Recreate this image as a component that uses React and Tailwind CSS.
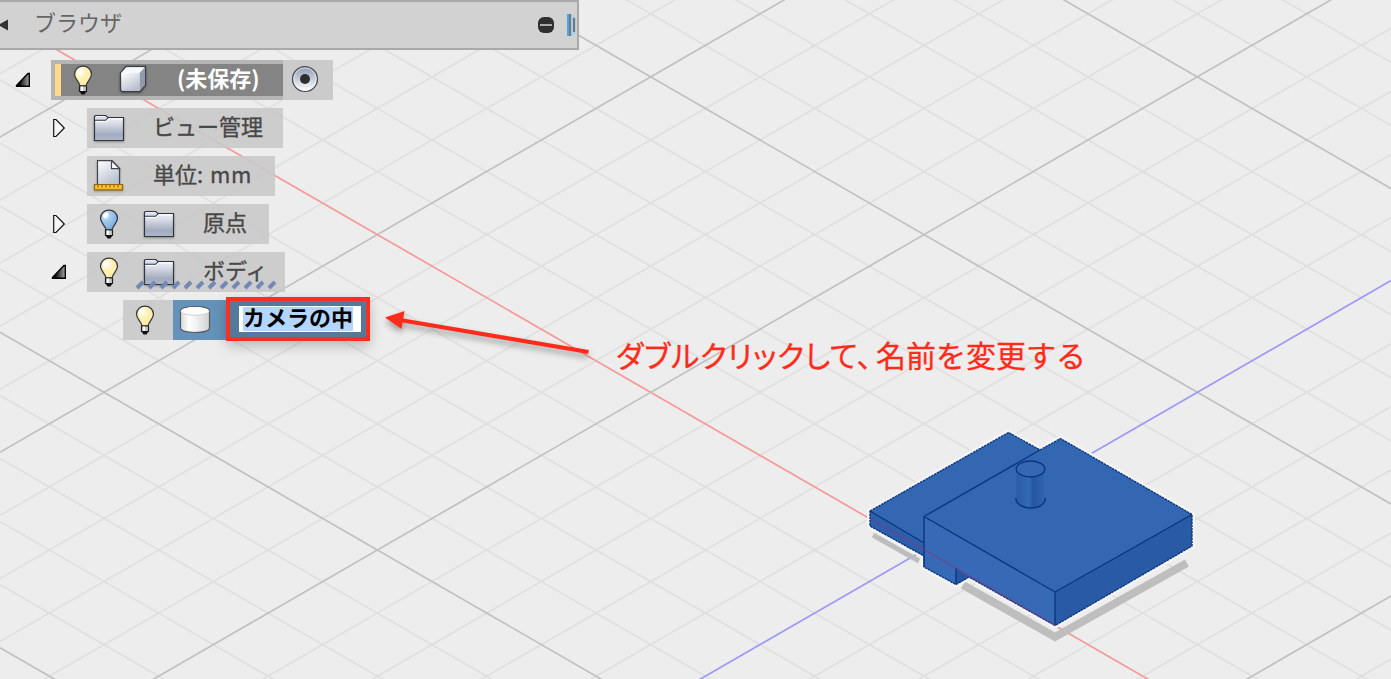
import React from "react";

const GRID_STEPS = Array.from({ length: 32 }, (_, i) => i - 12);

function GridLines() {
  const minor = [];
  const major = [];
  GRID_STEPS.forEach((k) => {
    const c = 76.9 + k * 63.08;
    const isMajor = k % 5 === 0;
    const stroke = isMajor ? "#c1c1c1" : "#e0e0e0";
    const down = k === 5 ? "#f59a98" : stroke;
    const up = k === 10 ? "#9c9af4" : stroke;
    const width = isMajor ? 1.7 : 1.8;
    (isMajor ? major : minor).push(
      <line key={"d" + k} x1="0" y1={c - 375.4} x2="1391" y2={c + 427.1} stroke={down} strokeWidth={width} />,
      <line key={"u" + k} x1="0" y1={c + 375.4} x2="1391" y2={c - 427.1} stroke={up} strokeWidth={width} />
    );
  });
  return <g>{minor}{major}</g>;
}

function Model() {
  const outline =
    "M870 511 L1008.5 432.5 L1040 450 L1060.5 438.5 L1192 514.5 V546 L1055 625.5 L969 577 L956 584.5 L924 567 V556 L870 526Z";
  return (
    <g strokeLinejoin="round">
      <path d="M873 535 L919 561" stroke="#bdbdbd" strokeWidth="5" />
      <path d="M963 585 L1055 637 L1187 563" fill="none" stroke="#bebebe" strokeWidth="8" strokeLinejoin="miter" />
      <path d={outline} fill="#f5f5f5" stroke="#f5f5f5" strokeWidth="6" />
      <path d={outline} fill="#3467b2" />
      <path d="M870 511 L924 543 V556 L870 526Z" fill="#2d5fab" />
      <path d="M924 516.5 L1055 592 V625.5 L969 577 L956 584.5 L924 567Z" fill="#3669b6" />
      <path d="M956 568 L969 577 L956 584.5Z" fill="#2457a0" />
      <path d="M1055 592 L1192 514.5 V546 L1055 625.5Z" fill="#285aa5" />
      <path d="M1016.5 470 V500 A14 8 0 0 0 1044.5 500 V470Z" fill="url(#pin)" />
      <g fill="none" stroke="#0b367f" strokeWidth="1.4">
        <path d={outline} strokeDasharray="2.4 0.8" />
        <path d="M870 511 L924 543 M1040 450 L924 516.5 V567 M924 516.5 L1055 592 L1192 514.5 M1055 592 V625 M956 568 V584" />
        <ellipse cx="1030.5" cy="469" rx="14.3" ry="8" fill="#3467b2" />
        <path d="M1016 498 C1015 503 1022 508 1031 508 C1040 508 1046 503 1045 498" />
      </g>
      <path d="M870 518.5 L1055 625.2" stroke="#7a3d86" strokeWidth="1.3" opacity=".75" />
    </g>
  );
}

function Scene() {
  return (
    <svg className="absolute inset-0" width="1391" height="679" viewBox="0 0 1391 679">
      <defs>
        <linearGradient id="pin">
          <stop offset="0" stopColor="#2a5ba4" />
          <stop offset=".45" stopColor="#3469b6" />
          <stop offset=".6" stopColor="#2456a0" />
          <stop offset="1" stopColor="#3164b0" />
        </linearGradient>
      </defs>
      <GridLines />
      <Model />
    </svg>
  );
}

function Gradients() {
  return (
    <svg className="absolute" width="0" height="0">
      <defs>
        <linearGradient id="metal" x1="0" y1="0" x2="0" y2="1">
          <stop offset="0" stopColor="#f3f5f9" />
          <stop offset=".3" stopColor="#dcdfe8" />
          <stop offset=".75" stopColor="#a3abc0" />
          <stop offset="1" stopColor="#aeb6c8" />
        </linearGradient>
        <linearGradient id="paper" x1="0" y1="0" x2=".6" y2="1">
          <stop offset="0" stopColor="#fff" />
          <stop offset="1" stopColor="#b9c0d0" />
        </linearGradient>
        <linearGradient id="ring" x1="0" y1="0" x2="0" y2="1">
          <stop offset="0" stopColor="#8d9ab3" />
          <stop offset="1" stopColor="#fff" />
        </linearGradient>
        <linearGradient id="drum">
          <stop offset="0" stopColor="#d8d8d8" />
          <stop offset=".3" stopColor="#fff" />
          <stop offset=".6" stopColor="#eee" />
          <stop offset="1" stopColor="#d0d0d0" />
        </linearGradient>
        <linearGradient id="wedge">
          <stop offset="0.2" stopColor="#000" />
          <stop offset="1" stopColor="#a8a8a8" />
        </linearGradient>
        <radialGradient id="glowOn" cx=".35" cy=".3" r=".75">
          <stop offset="0" stopColor="#fff" />
          <stop offset=".4" stopColor="#fff2b8" />
          <stop offset="1" stopColor="#fdeaa0" />
        </radialGradient>
        <radialGradient id="glowOff" cx=".3" cy=".25" r=".75">
          <stop offset="0" stopColor="#fff" />
          <stop offset=".35" stopColor="#a9cdf0" />
          <stop offset="1" stopColor="#7badde" />
        </radialGradient>
      </defs>
    </svg>
  );
}

function Bulb({ off = false }) {
  return (
    <svg className="shrink-0" width="20" height="30" viewBox="0 0 20 30">
      <path
        d="M7 21 C6.500 16.500 1.500 14 1.500 9.200 C1.500 4.400 5.200 1.200 10 1.200 S18.500 4.400 18.500 9.200 C18.500 14 13.500 16.500 13 21Z"
        fill={off ? "url(#glowOff)" : "url(#glowOn)"}
        stroke="#3a3a3a"
        strokeWidth="1.3"
      />
      <ellipse cx="6.8" cy="6.4" rx="2.2" ry="3" fill="#fff" opacity=".9" transform="rotate(30 6.8 6.4)" />
      <path d="M6.500 21 H13.500 V26.500 H6.500Z" fill="#c8c8c8" stroke="#222" strokeWidth="1.200" />
      <path d="M9 21.500 V26" stroke="#fff" strokeWidth="2" />
      <path d="M6.200 26 H13.800 L11.500 29.500 H8.500Z" fill="#111" />
    </svg>
  );
}

function Cube() {
  return (
    <svg className="shrink-0 drop-shadow-[0_1px_1px_rgba(0,0,0,0.35)]" width="28" height="28" viewBox="0 0 28 28">
      <path d="M1.500 8 L7 1.500 H26.500 V20 L21 26.500 H3 L1.500 25Z" fill="#c8ccd6" stroke="#3b3f48" strokeWidth="1.300" />
      <path d="M2.200 8 L7.300 2.200 H25.500 L20.500 8Z" fill="#f7f8fb" />
      <path d="M20.700 8 L26 2.500 V19.800 L20.700 25.500Z" fill="#929baa" />
      <path d="M2.200 8 H20.500 V25.800 H3Z" fill="url(#paper)" />
    </svg>
  );
}

function Folder() {
  return (
    <svg className="shrink-0 drop-shadow-[0_1px_1px_rgba(0,0,0,0.35)]" width="32" height="28" viewBox="0 0 32 28">
      <path d="M1.500 2.500 L2.500 1.500 H12.500 L15 3.500 H30.500 V26.500 H1.500Z" fill="url(#metal)" stroke="#33373f" strokeWidth="1.200" />
      <path d="M2.200 3 H12 L14 4 L12 6 H2.200Z" fill="#d7dcee" />
      <path d="M2 6.300 H12.500 L15 3.800" fill="none" stroke="#33373f" strokeWidth="1.100" />
      <path d="M2.500 7.500 H13 L15.500 5 H29.500" fill="none" stroke="#fff" />
    </svg>
  );
}

function UnitsPage() {
  return (
    <svg className="shrink-0 drop-shadow-[0_1px_1px_rgba(0,0,0,0.3)]" width="32" height="32" viewBox="0 0 32 32">
      <path d="M4.500 0.700 H19 L26.500 8.500 V25 H4.500Z" fill="url(#paper)" stroke="#42464f" strokeWidth="1.200" />
      <path d="M18.500 0.700 V8.700 H26.500Z" fill="#fff" stroke="#42464f" strokeWidth="1.200" />
      <path d="M1.500 24.500 H29.500 V29.800 H1.500Z" fill="#f3c132" stroke="#9c640a" strokeWidth="1.200" />
      <path d="M5 25 V27.500 M9 25 V27.500 M13 25 V27.500 M17 25 V27.500 M21 25 V27.500 M25 25 V27.500" stroke="#8a5c08" />
    </svg>
  );
}

function Target() {
  return (
    <svg width="30" height="30" viewBox="0 0 30 30">
      <circle cx="15" cy="15" r="12.500" fill="url(#ring)" stroke="#45474d" strokeWidth="1.200" />
      <circle cx="15" cy="15" r="11" fill="none" stroke="#fff" opacity=".5" />
      <circle cx="15" cy="15" r="5" fill="#2e2e30" />
    </svg>
  );
}

function Drum() {
  return (
    <svg width="32" height="30" viewBox="0 0 32 30">
      <path d="M1.500 6 C1.500 0 30.500 0 30.500 6 V23 C30.500 29 1.500 29 1.500 23Z" fill="url(#drum)" stroke="#555c65" strokeWidth="1.200" />
      <ellipse cx="16" cy="6" rx="14" ry="4" fill="#fdfdfd" />
      <path d="M2 6.500 C3 11.500 29 11.500 30 6.500" fill="none" stroke="#d0d0d0" />
    </svg>
  );
}

function Twisty({ open = false }) {
  return open ? (
    <svg className="shrink-0" width="16" height="16" viewBox="0 0 16 16">
      <path d="M1.500 13.500 L13 1.500 H14.300 V14.300 H1.500Z" fill="url(#wedge)" stroke="#000" strokeWidth="1.400" />
    </svg>
  ) : (
    <svg className="shrink-0" width="14" height="20" viewBox="0 0 14 20">
      <path d="M1.700 1.500 H4 L12.300 10 L4 18.500 H1.700Z" fill="#f7f7f7" stroke="#111" strokeWidth="1.200" />
    </svg>
  );
}

function Header() {
  return (
    <header className="flex h-[50px] w-[579px] items-center border-y-2 border-r-2 border-[#a9a9a9] bg-[#d2d2d2]">
      <svg className="shrink-0" width="9" height="12" viewBox="0 0 9 12">
        <path d="M-2 6 L8 0.500 V11.500Z" fill="#333" />
      </svg>
      <h1 className="-mt-2 ml-[25px] text-[22px] leading-none text-[#666]">ブラウザ</h1>
      <span className="ml-auto flex size-4 items-center justify-center rounded-[6px] bg-[#303030]">
        <span className="h-[2px] w-3 bg-[#aaa]" />
      </span>
      <svg className="mr-px ml-[13px]" width="9" height="22" viewBox="0 0 9 22">
        <path d="M0 0 H5 L9 4 V18 L5 22 H0Z" fill="#a9cceb" />
        <path d="M1 0 V22" stroke="#45a7ec" strokeWidth="2" />
        <path d="M3 0 V22 M7 4 V18" stroke="#777" strokeWidth="2" />
      </svg>
    </header>
  );
}

function Label({ children }) {
  return <span className="mb-[6px] [-webkit-text-stroke:0.35px_#484848]">{children}</span>;
}

export default function App() {
  return (
    <main className="relative h-[679px] w-[1391px] overflow-hidden bg-[#ededed] font-['Noto_Sans_CJK_JP',sans-serif]">
      <Gradients />
      <Scene />
      <div className="relative flex flex-col items-start">
        <Header />
        <ul className="mt-[10px] flex flex-col gap-2 text-[22px] leading-none whitespace-nowrap text-[#484848]">
          <li className="flex h-10 items-center pl-[15px]">
            <Twisty open />
            <div className="ml-5 flex h-10 w-[282px] bg-[#c9c9c9]/95">
              <div className="flex h-10 w-[232px] bg-[#b5b5b5] py-1 pl-1">
                <div className="flex h-8 w-[228px] items-center border-l-[6px] border-[#fcd98b] bg-[#848484]">
                  <span className="ml-3 flex"><Bulb /></span>
                  <span className="ml-[26px] flex -translate-y-px"><Cube /></span>
                  <b className="mb-[6px] ml-[30px] font-bold text-white">(未保存)</b>
                </div>
              </div>
              <span className="mt-1 ml-[7px]"><Target /></span>
            </div>
          </li>
          <li className="flex h-10 items-center pl-[52px]">
            <Twisty />
            <div className="ml-[21px] flex h-10 w-[196px] items-center bg-[#c9c9c9]/90 pl-[6px]">
              <Folder />
              <span className="ml-[28px] flex"><Label>ビュー管理</Label></span>
            </div>
          </li>
          <li className="flex h-10 items-center pl-[87px]">
            <div className="flex h-10 w-[188px] items-center bg-[#c9c9c9]/90 pl-[6px]">
              <UnitsPage />
              <span className="ml-[28px] flex"><Label>単位: <span className="ml-[2px] tracking-[0.5px]">mm</span></Label></span>
            </div>
          </li>
          <li className="flex h-10 items-center pl-[52px]">
            <Twisty />
            <div className="ml-[21px] flex h-10 w-[182px] items-center bg-[#c9c9c9]/90 pl-3">
              <Bulb off />
              <span className="ml-6 flex"><Folder /></span>
              <span className="ml-[28px] flex"><Label>原点</Label></span>
            </div>
          </li>
          <li className="flex h-10 items-center pl-[51px]">
            <Twisty open />
            <div className="relative ml-5 flex h-10 w-[198px] items-center bg-[#c9c9c9]/90 pl-3">
              <Bulb />
              <span className="ml-6 flex"><Folder /></span>
              <span className="ml-[28px] flex"><Label>ボディ</Label></span>
              <svg className="absolute top-[28px] left-[48px]" width="144" height="10" viewBox="0 0 144 10">
                {Array.from({ length: 12 }, (_, i) => (
                  <path key={i} d={`M${2 + i * 12} 8 L${8 + i * 12} 2`} stroke="#7389b5" strokeWidth="4" />
                ))}
              </svg>
            </div>
          </li>
          <li className="flex h-10 items-center pl-[123px]">
            <div className="flex h-10 w-[50px] items-center bg-[#c9c9c9]/90 pl-3"><Bulb /></div>
            <div className="flex h-10 w-[53px] items-center bg-[#6592b8] pl-[6px]"><Drum /></div>
            <div className="-mt-[2px] flex h-11 w-[144px] shrink-0 items-center border-4 border-[#fb2f1d] bg-[#54799a] pl-[9px] shadow-[0_5px_12px_rgba(0,0,0,0.22)]">
              <div className="flex h-[26px] w-[122px] items-center bg-white pl-1">
                <b className="flex h-6 items-center bg-[#b2d6ff] pb-[7px] font-bold text-black">カメラの中</b>
              </div>
            </div>
          </li>
        </ul>
      </div>
      <svg className="absolute top-[300px] left-[380px] drop-shadow-[0_4px_3px_rgba(0,0,0,0.35)]" width="220" height="65" viewBox="380 300 220 65">
        <path d="M400 320 L588.500 352" stroke="#fd2b19" strokeWidth="4" />
        <path d="M385 317.500 L404.500 311 L401.500 329Z" fill="#fd2b19" />
      </svg>
      <p className="absolute top-[339px] left-[616px] flex text-[30px] leading-[30px] whitespace-nowrap text-[#fd2b19] [-webkit-text-stroke:0.3px_#fd2b19]">
        <span className="w-[260px] tracking-[0.7px] [font-feature-settings:'palt']">ダブルクリックして、</span>
        <span>名前を変更する</span>
      </p>
    </main>
  );
}
